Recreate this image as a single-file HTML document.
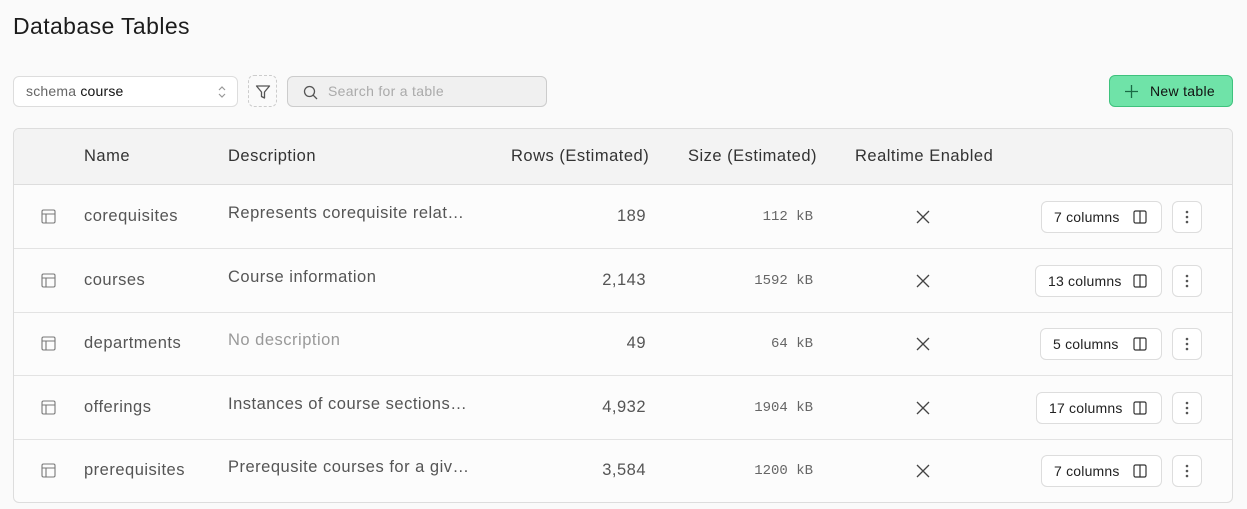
<!DOCTYPE html><html><head><style>
*{box-sizing:border-box;margin:0;padding:0}
body{width:1247px;height:509px;background:#fafafa;font-family:"Liberation Sans",sans-serif;color:#222;position:relative;overflow:hidden}
.a{position:absolute}
h1{position:absolute;left:13px;top:13px;font-size:23px;font-weight:400;color:#1c1c1c;letter-spacing:0.4px}
.sel{left:13px;top:76px;width:225px;height:31px;border:1px solid #ddd;border-radius:6px;background:#fff;font-size:14px;padding:6px 12px;color:#666;letter-spacing:0.2px}
.sel b{font-weight:400;color:#111}
.flt{left:248px;top:75px;width:29px;height:32px;border:1px dashed #ccc;border-radius:6px}
.srch{left:287px;top:76px;width:260px;height:31px;border:1px solid #ccc;border-radius:6px;background:#f0f0f0;font-size:14px;color:#aaa;padding:6px 0 0 40px;letter-spacing:0.3px}
.nt{left:1109px;top:75px;width:124px;height:32px;border:1px solid #3ec27d;border-radius:6px;background:#6fe3a8;font-size:14px;color:#111;padding:7px 0 0 40px;letter-spacing:0.3px}
.tbl{left:13px;top:128px;width:1220px;height:375px;border:1px solid #ddd;border-radius:6px;background:#fcfcfc;overflow:hidden}
.hd{position:absolute;left:0;top:0;width:100%;height:56px;background:#f3f3f3;border-bottom:1px solid #ddd;font-size:16.5px;color:#333;letter-spacing:0.5px}
.hd span,.r span{position:absolute}
.r{position:absolute;left:0;width:100%;height:64px;border-bottom:1px solid #e3e3e3;font-size:16.5px;color:#555;letter-spacing:0.5px}
.mono{font-family:"Liberation Mono",monospace;font-size:14px;color:#666;letter-spacing:0}
.cb{position:absolute;height:32px;border:1px solid #ddd;border-radius:6px;background:#fff;font-size:14px;color:#222;padding:7px 0 0 12px;letter-spacing:0.2px}
.db{position:absolute;left:1158px;width:30px;height:32px;border:1px solid #ddd;border-radius:6px;background:#fff}
</style></head><body>
<h1>Database Tables</h1>
<div class="a sel">schema <b>course</b>
<svg class="a" style="left:203px;top:8px" width="10" height="14" viewBox="0 0 10 14"><path d="M2 5l3-3 3 3M2 9l3 3 3-3" fill="none" stroke="#999" stroke-width="1.2"/></svg></div>
<div class="a flt"><svg class="a" style="left:6px;top:8px" width="16" height="16" viewBox="0 0 16 16"><path d="M1.5 2h13l-5 6v6l-3-1.5V8z" fill="none" stroke="#555" stroke-width="1.3" stroke-linejoin="round"/></svg></div>
<div class="a srch"><svg class="a" style="left:15px;top:8px" width="15" height="15" viewBox="0 0 15 15"><circle cx="6.5" cy="6.5" r="5" fill="none" stroke="#555" stroke-width="1.3"/><path d="M10.2 10.2L14 14" stroke="#555" stroke-width="1.3"/></svg>Search for a table</div>
<div class="a nt"><svg class="a" style="left:15px;top:9px" width="13" height="13" viewBox="0 0 13 13"><path d="M6.5 0v13M0 6.5h13" stroke="#1a6b45" stroke-width="1.3"/></svg>New table</div>
<div class="a tbl">
<div class="hd"><span style="left:70px;top:18px">Name</span><span style="left:214px;top:18px">Description</span><span style="left:497px;top:18px">Rows (Estimated)</span><span style="left:674px;top:18px">Size (Estimated)</span><span style="left:841px;top:18px">Realtime Enabled</span></div>
<div id="rows"></div>
</div>
<script>
var d=[["corequisites","Represents corequisite relat…","189","112",1,"7 columns",1040],["courses","Course information","2,143","1592",0,"13 columns",1034],["departments","No description","49","64",0,"5 columns",1039],["offerings","Instances of course sections…","4,932","1904",0,"17 columns",1035],["prerequisites","Prerequsite courses for a giv…","3,584","1200",0,"7 columns",1040]];
var tops=[56,120,183,247,310],h="";
d.forEach(function(r,i){var dc=r[1]=="No description"?"#999":"#555";
h+='<div class="r" style="top:'+tops[i]+'px"><svg style="position:absolute;left:27px;top:24px" width="15" height="15" viewBox="0 0 15 15"><rect x="1" y="1" width="13" height="13" rx="1.5" fill="none" stroke="#777" stroke-width="1.1"/><path d="M1 5h13M5 5v9" stroke="#777" stroke-width="1.1"/></svg>'+
'<span style="left:70px;top:22px">'+r[0]+'</span><span style="left:214px;top:19px;color:'+dc+'">'+r[1]+'</span>'+
'<span style="right:586px;top:22px;color:#555">'+r[2]+'</span><span class="mono" style="right:419px;top:24px">'+r[3]+' kB</span>'+
'<svg style="position:absolute;left:902px;top:25px" width="14" height="14" viewBox="0 0 14 14"><path d="M1 1l12 12M13 1L1 13" stroke="#444" stroke-width="1.3"/></svg>'+
'<div class="cb" style="left:'+(r[6]-13)+'px;width:'+(1161-r[6])+'px;top:16px">'+r[5]+'<svg style="position:absolute;right:14px;top:8px" width="14" height="14" viewBox="0 0 14 14"><rect x="1" y="1" width="12" height="12" rx="1.5" fill="none" stroke="#333" stroke-width="1.2"/><path d="M7 1v12" stroke="#333" stroke-width="1.2"/></svg></div>'+
'<div class="db" style="top:16px"><svg style="position:absolute;left:12px;top:8px" width="4" height="14"><circle cx="2" cy="2" r="1.3" fill="#555"/><circle cx="2" cy="7" r="1.3" fill="#555"/><circle cx="2" cy="12" r="1.3" fill="#555"/></svg></div></div>';});
document.getElementById("rows").innerHTML=h;
</script>
</body></html>
